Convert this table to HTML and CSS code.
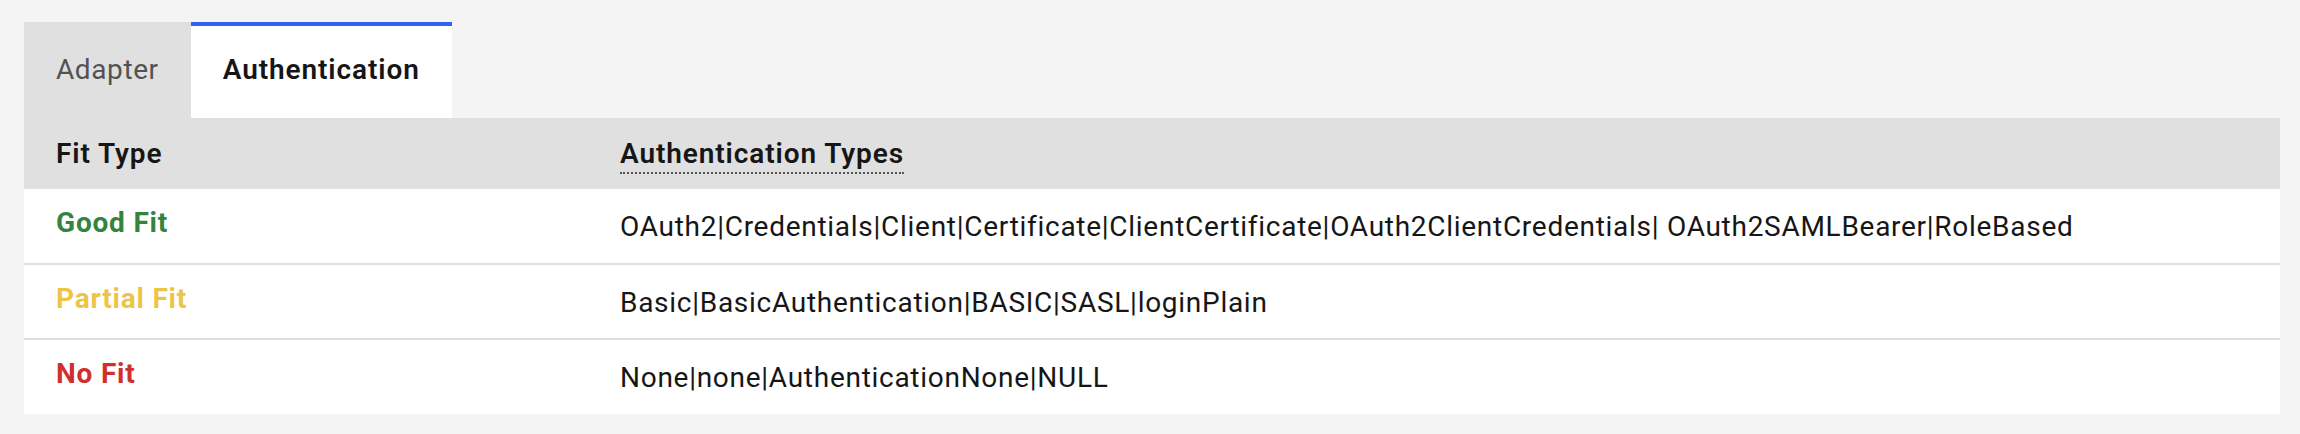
FILE: index.html
```html
<!DOCTYPE html>
<html lang="en">
<head>
<meta charset="utf-8">
<title>Authentication Fit</title>
<link rel="stylesheet" href="styles.css">
</head>
<body>
<div class="page">
  <div class="tabs">
    <div class="tab">Adapter</div>
    <div class="tab tab-selected">Authentication</div>
  </div>
  <table class="fit-table">
    <colgroup>
      <col class="col-fit">
      <col>
    </colgroup>
    <thead>
      <tr>
        <th>Fit Type</th>
        <th><span class="definition">Authentication Types</span></th>
      </tr>
    </thead>
    <tbody>
      <tr>
        <td><span class="fit fit-good">Good Fit</span></td>
        <td><span class="types">OAuth2|Credentials|Client|Certificate|ClientCertificate|OAuth2ClientCredentials| OAuth2SAMLBearer|RoleBased</span></td>
      </tr>
      <tr>
        <td><span class="fit fit-partial">Partial Fit</span></td>
        <td><span class="types">Basic|BasicAuthentication|BASIC|SASL|loginPlain</span></td>
      </tr>
      <tr>
        <td><span class="fit fit-none">No Fit</span></td>
        <td><span class="types">None|none|AuthenticationNone|NULL</span></td>
      </tr>
    </tbody>
  </table>
</div>
</body>
</html>
```

FILE: styles.css
```css
html, body {
  margin: 0;
  padding: 0;
  background: #f4f4f4;
}

body {
  font-family: Roboto, "Liberation Sans", sans-serif;
  color: #161616;
}

.page {
  padding: 22px 20px 0 24px;
}

.tabs {
  display: flex;
  height: 96px;
}

.tab {
  box-sizing: border-box;
  padding: 0 32px;
  line-height: 96px;
  font-size: 28px;
  letter-spacing: 0.6px;
  color: #525252;
  background: #e0e0e0;
}

.tab-selected {
  background: #ffffff;
  color: #161616;
  font-weight: 600;
  letter-spacing: 0.9px;
  box-shadow: inset 0 4px 0 0 #3063f4;
}

.fit-table {
  width: 100%;
  border-collapse: collapse;
  table-layout: fixed;
  font-size: 28px;
}

.col-fit {
  width: 25%;
}

.fit-table th {
  height: 71px;
  padding: 0 32px;
  background: #e0e0e0;
  text-align: left;
  font-weight: 600;
  letter-spacing: 0.9px;
  color: #161616;
  vertical-align: middle;
}

.definition {
  border-bottom: 2px dotted #525252;
  padding-bottom: 2px;
}

.fit-table td {
  height: 75px;
  padding: 0 32px;
  background: #ffffff;
  border-bottom: 2px solid #e0e0e0;
  vertical-align: top;
  box-sizing: border-box;
}

.fit-table tr:last-child td {
  border-bottom: none;
}

.fit {
  display: block;
  padding-top: 14px;
  line-height: 40px;
  font-weight: 700;
  letter-spacing: 0.8px;
}

.types {
  display: block;
  padding-top: 18px;
  line-height: 40px;
  letter-spacing: 0.72px;
  color: #161616;
}

.fit-good { color: #34843d; }
.fit-partial { color: #ecc547; }
.fit-none { color: #d12f2f; }
```
